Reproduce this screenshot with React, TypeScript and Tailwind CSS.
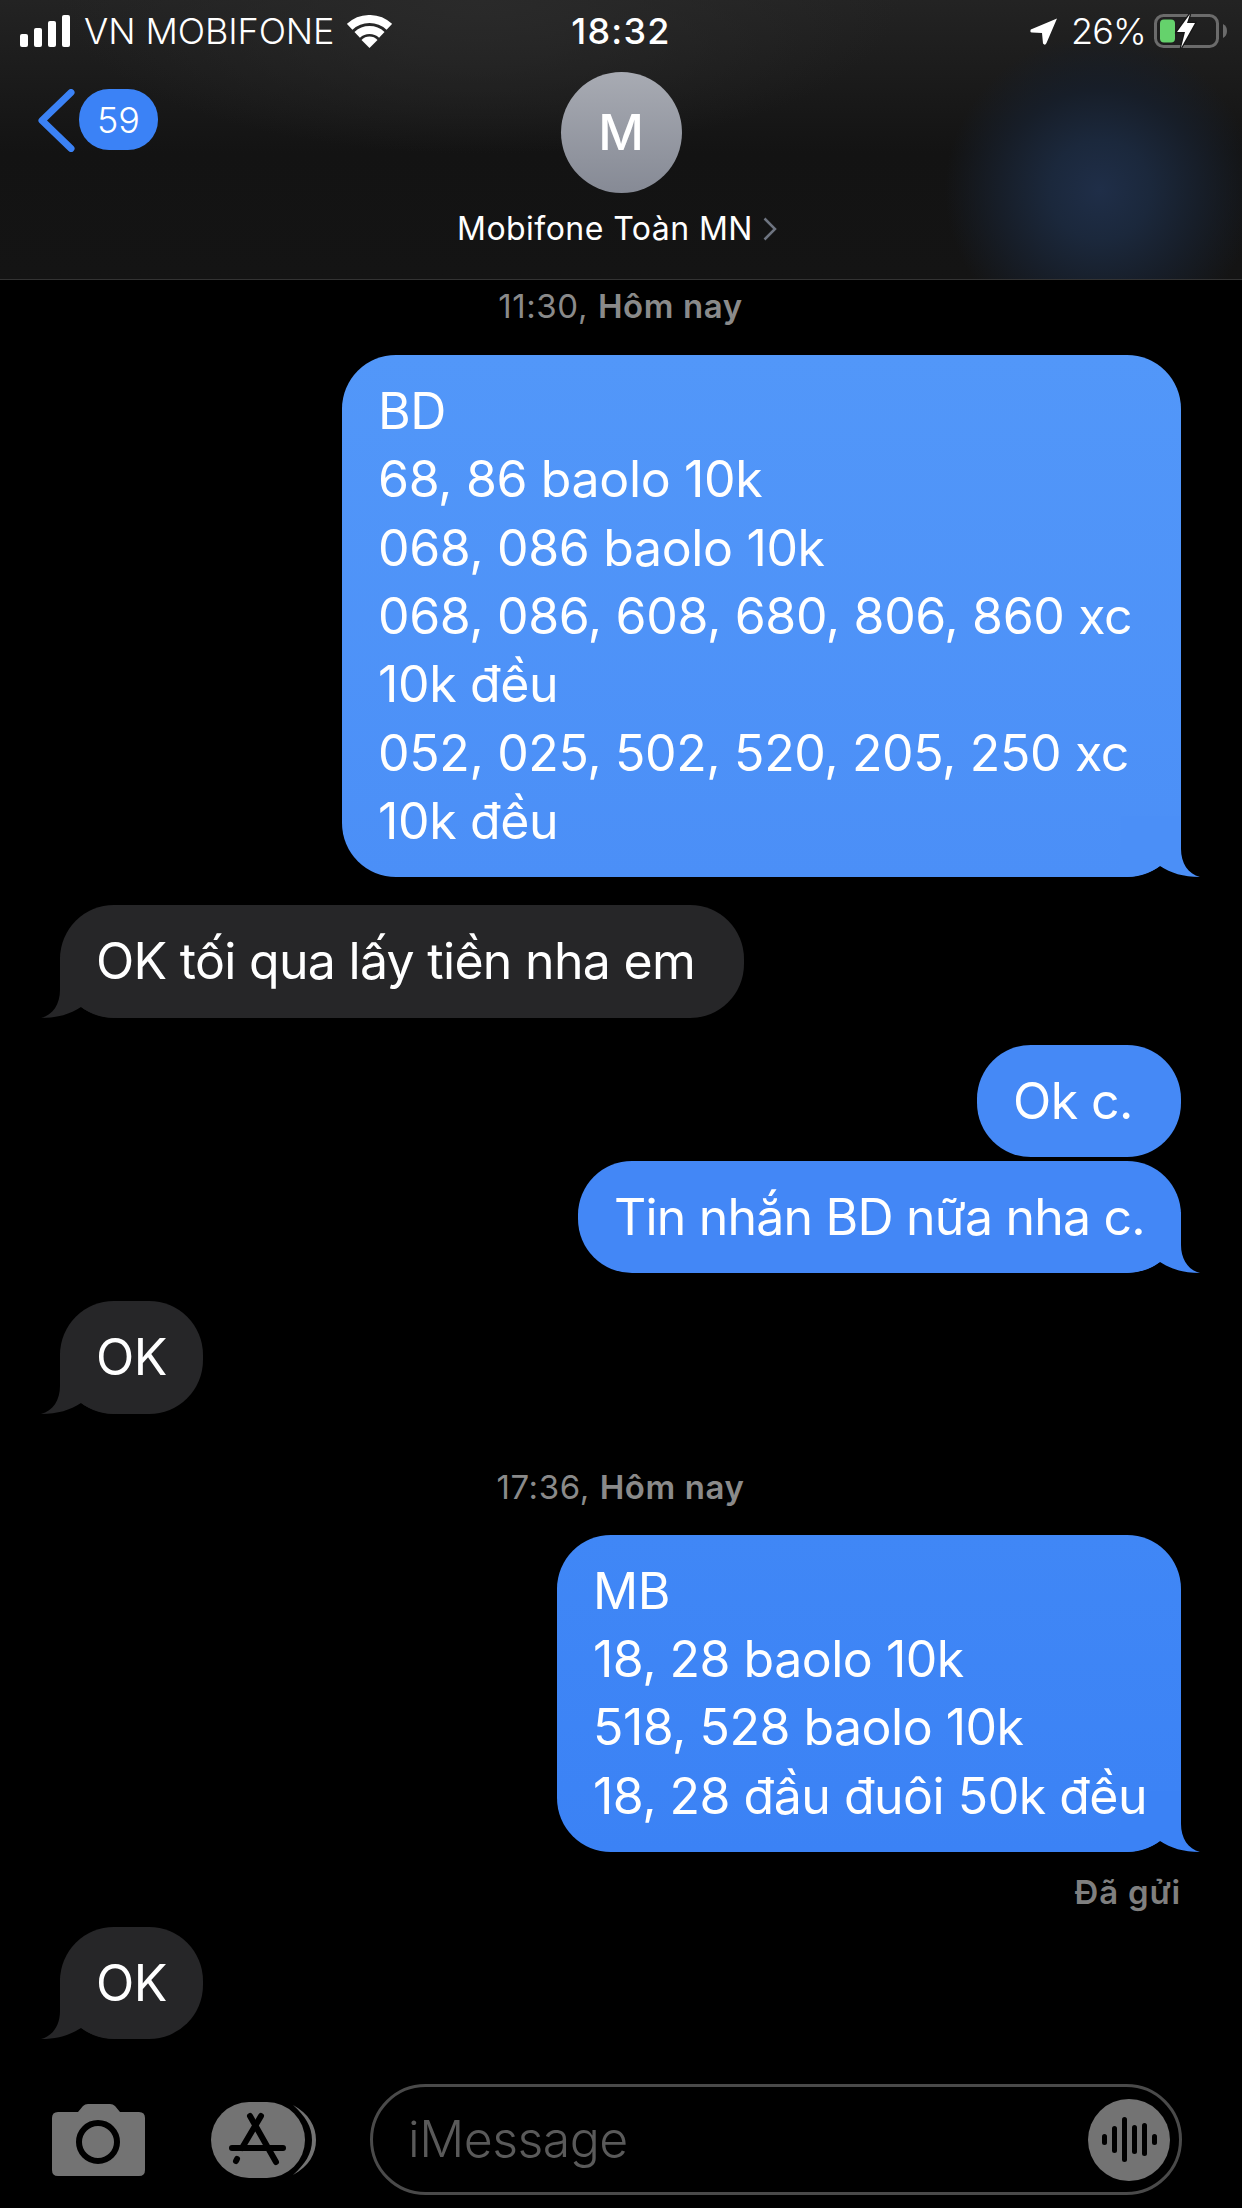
const sans = 'font-["Inter","Noto_Sans",sans-serif]';

type BubbleProps = {
  side: 'left' | 'right';
  width: string;
  color: string;
  tailColor?: string;
  tracking?: string;
  lines: string[];
  className?: string;
};

function Bubble({ side, width, color, tailColor, tracking = 'tracking-[-0.6px]', lines, className = '' }: BubbleProps) {
  return (
    <div className={`relative rounded-[54px] py-[22px] pl-[36px] text-[50px] leading-[68.33px] text-white ${tracking} ${width} ${color} ${side === 'right' ? 'self-end' : 'self-start'} ${className}`}>
      {lines.map((line) => (
        <div key={line} className="relative z-10 whitespace-nowrap">{line}</div>
      ))}
      {tailColor && (
        <svg
          viewBox="0 0 79 61"
          className={`absolute bottom-0 h-[61px] w-[79px] ${tailColor} ${side === 'right' ? 'left-[calc(100%-60px)]' : 'right-[calc(100%-60px)] -scale-x-100'}`}
        >
          <path fill="currentColor" d="M60 0 L60 33 C60 47 67 58 79 61 C62 61 50 57 39 50 C31 56 18 61 2 61 L0 61 L0 0 Z" />
        </svg>
      )}
    </div>
  );
}

function Stamp({ time, className = '' }: { time: string; className?: string }) {
  return (
    <div className={`h-[40px] text-center text-[33px] leading-[40px] tracking-[0.6px] text-[#8a8a8a] ${className}`}>
      {time}, <span className="font-semibold">Hôm nay</span>
    </div>
  );
}

function StatusBar() {
  return (
    <div className="grid h-[62px] grid-cols-[1fr_auto_1fr] items-center text-[36px] text-white">
      <div className="flex items-center pl-[20px]">
        <div className="flex h-[32px] items-end gap-[6px]">
          <div className="h-[13px] w-[8px] rounded-[2px] bg-white" />
          <div className="h-[19px] w-[8px] rounded-[2px] bg-white" />
          <div className="h-[26px] w-[8px] rounded-[2px] bg-white" />
          <div className="h-[32px] w-[8px] rounded-[2px] bg-white" />
        </div>
        <span className="ml-[14px] font-light tracking-[-0.1px]">VN MOBIFONE</span>
        <svg viewBox="0 0 45 33" className="ml-[13px] h-[33px] w-[45px]">
          <path d="M2.7 11.8 A29 29 0 0 1 42.3 11.8" fill="none" stroke="white" strokeWidth="8" />
          <path d="M10.2 19.8 A18 18 0 0 1 34.8 19.8" fill="none" stroke="white" strokeWidth="8" />
          <path d="M22.5 33 L14.5 25 A11 11 0 0 1 30.5 25 Z" fill="white" />
        </svg>
      </div>
      <span className="font-medium tracking-[1.2px]">18:32</span>
      <div className="flex items-center justify-end pr-[15px]">
        <svg viewBox="0 0 27 27" className="h-[27px] w-[27px]">
          <path d="M27 0.5 L0.8 11.5 Q-0.5 14.5 2 14.5 L12 15 L13 25.5 Q15 28 16.5 25 Z" fill="white" />
        </svg>
        <span className="ml-[14px] font-light tracking-[-0.8px]">26%</span>
        <svg viewBox="0 0 73 36" className="ml-[8px] h-[36px] w-[73px]">
          <rect x="1.5" y="2.5" width="62" height="31" rx="8" fill="none" stroke="#6b6b6b" strokeWidth="3" />
          <rect x="6" y="6.5" width="15" height="23" rx="4" fill="#65d26c" />
          <path d="M69 11 Q73 13 73 18 Q73 23 69 25 Z" fill="#6b6b6b" />
          <path d="M36 1 L23 19 L31 19 L27 35 L41 10 L33 10 Z" fill="white" stroke="#161616" strokeWidth="2.5" paintOrder="stroke" />
        </svg>
      </div>
    </div>
  );
}

function Header() {
  return (
    <header className="h-[280px] shrink-0 border-b border-[#333333] bg-[radial-gradient(circle_at_1100px_190px,#1f2e48_0,#1b283c_50px,#171e29_100px,transparent_155px),radial-gradient(ellipse_at_480px_0px,#2a2a2a_0,transparent_420px),linear-gradient(to_bottom,#232323,#131313_55%,#141414)]">
      <StatusBar />
      <div className="mt-[10px] grid grid-cols-[1fr_auto_1fr]">
        <div className="flex items-start pl-[38px] pt-[17px]">
          <svg viewBox="0 0 37 63" className="h-[63px] w-[37px]">
            <path d="M33 3.5 L4 31.5 L33 59.5" fill="none" stroke="#3b82f6" strokeWidth="7" strokeLinecap="round" strokeLinejoin="round" />
          </svg>
          <div className="ml-[4px] flex h-[61px] w-[79px] items-center justify-center rounded-[30px] bg-[#3b82f6] text-[36px] font-light text-white">
            59
          </div>
        </div>
        <div className="flex h-[121px] w-[121px] items-center justify-center rounded-full bg-linear-to-b from-[#a8abb3] to-[#868a95] text-[50px] font-medium text-white">
          M
        </div>
      </div>
      <div className="mt-[14px] flex items-center justify-center pr-[8px] text-[32px] leading-[44px] tracking-[0.45px] text-white">
        <span>Mobifone Toàn MN</span>
        <svg viewBox="0 0 14 24" className="ml-[10px] h-[24px] w-[14px]">
          <path d="M1.5 1.5 L12 12 L1.5 22.5" fill="none" stroke="#6e7480" strokeWidth="2.5" />
        </svg>
      </div>
    </header>
  );
}

function Composer() {
  return (
    <footer className="mt-auto flex items-center pb-[13px] pl-[52px]">
      <svg viewBox="0 0 93 72" className="h-[72px] w-[93px]">
        <path d="M6 8 H26 L31 2 Q33 0 36 0 H58 Q61 0 63 2 L68 8 H87 Q93 8 93 14 V66 Q93 72 87 72 H6 Q0 72 0 66 V14 Q0 8 6 8 Z" fill="#737373" />
        <circle cx="46" cy="38" r="19" fill="none" stroke="black" strokeWidth="6" />
      </svg>
      <svg viewBox="0 0 106 76" className="ml-[66px] h-[76px] w-[106px]">
        <path d="M82 3 C98 12 105 24 105 38 C105 52 98 64 82 73 C94 62 101 52 101 38 C101 24 94 14 82 3 Z" fill="#737373" />
        <rect x="0" y="0" width="94" height="76" rx="38" fill="#737373" stroke="black" strokeWidth="6" paintOrder="stroke" />
        <g stroke="black" strokeWidth="6" strokeLinecap="round" fill="none">
          <path d="M39 14 L65 60" />
          <path d="M50 14 L31 46" />
          <path d="M21 46 H72" />
          <path d="M26 57 L25 59" />
        </g>
      </svg>
      <div className="ml-[53px] flex h-[111px] w-[812px] items-center rounded-[56px] border-[3px] border-[#4a4a4a] pl-[35px] pr-[9px]">
        <span className="text-[50px] font-light tracking-[-0.5px] text-[#5a5a5a]">iMessage</span>
        <div className="ml-auto flex h-[82px] w-[82px] items-center justify-center gap-[5px] rounded-full bg-[#737373]">
          <div className="h-[11px] w-[5px] rounded-full bg-black" />
          <div className="h-[27px] w-[5px] rounded-full bg-black" />
          <div className="h-[45px] w-[5px] rounded-full bg-black" />
          <div className="h-[29px] w-[5px] rounded-full bg-black" />
          <div className="h-[33px] w-[5px] rounded-full bg-black" />
          <div className="h-[11px] w-[5px] rounded-full bg-black" />
        </div>
      </div>
    </footer>
  );
}

export default function App() {
  return (
    <div className={`flex h-[2208px] w-[1242px] flex-col overflow-hidden bg-black ${sans}`}>
      <Header />
      <main className="flex flex-col pl-[60px] pr-[61px] pt-[6px]">
        <Stamp time="11:30" />
        <Bubble
          side="right"
          width="w-[839px]"
          color="bg-linear-to-b from-[#5297f9] to-[#4b8ff7]"
          tailColor="text-[#4b8ff7]"
          tracking="tracking-[-0.35px]"
          className="mt-[29px]"
          lines={[
            'BD',
            '68, 86 baolo 10k',
            '068, 086 baolo 10k',
            '068, 086, 608, 680, 806, 860 xc',
            '10k đều',
            '052, 025, 502, 520, 205, 250 xc',
            '10k đều ',
          ]}
        />
        <Bubble
          side="left"
          width="w-[684px]"
          color="bg-[#262628]"
          tailColor="text-[#262628]"
          tracking="tracking-[-0.7px]"
          className="mt-[28px]"
          lines={['OK tối qua lấy tiền nha em']}
        />
        <Bubble side="right" width="w-[204px]" color="bg-[#4589f6]" className="mt-[27px]" lines={['Ok c.']} />
        <Bubble
          side="right"
          width="w-[603px]"
          color="bg-[#4387f6]"
          tailColor="text-[#4387f6]"
          tracking="tracking-[-0.8px]"
          className="mt-[4px]"
          lines={['Tin nhắn BD nữa nha c.']}
        />
        <Bubble side="left" width="w-[143px]" color="bg-[#262628]" tailColor="text-[#262628]" className="mt-[28px]" lines={['OK']} />
        <Stamp time="17:36" className="mt-[53px]" />
        <Bubble
          side="right"
          width="w-[624px]"
          color="bg-linear-to-b from-[#4087f6] to-[#3b82f5]"
          tailColor="text-[#3b82f5]"
          tracking="tracking-[-0.5px]"
          className="mt-[28px]"
          lines={['MB', '18, 28 baolo 10k', '518, 528 baolo 10k', '18, 28 đầu đuôi 50k đều']}
        />
        <div className="mt-[20px] h-[40px] self-end text-[33px] font-semibold leading-[40px] tracking-[0.8px] text-[#7f7f7f]">Đã gửi</div>
        <Bubble side="left" width="w-[143px]" color="bg-[#262628]" tailColor="text-[#262628]" className="mt-[15px]" lines={['OK']} />
      </main>
      <Composer />
    </div>
  );
}
